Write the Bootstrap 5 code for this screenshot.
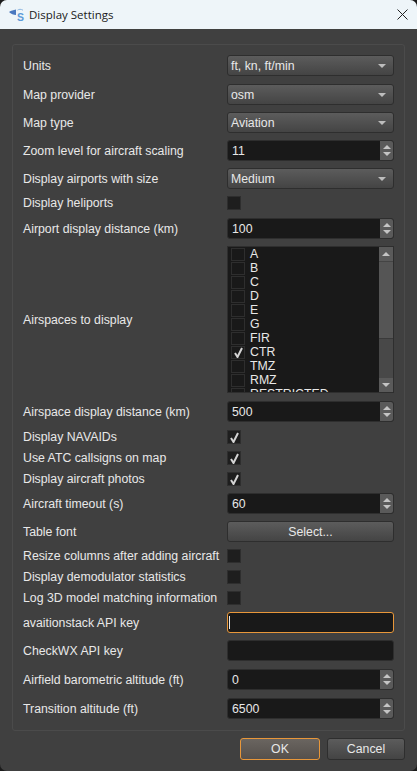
<!DOCTYPE html>
<html lang="en">
<head>
    <meta charset="UTF-8">
    <meta name="viewport" content="width=device-width, initial-scale=1.0">
    <title>Display Settings</title>
    <link rel="stylesheet" href="https://cdn.jsdelivr.net/npm/bootstrap@5.3.0/dist/css/bootstrap.min.css">
    <style>
        html { height: 100%; background: #1c1c1c; }
        body { height: 100%; background: #404040; color: #e8e8e8; font-family: "Liberation Sans", Arial, sans-serif; font-size: 12.3px; overflow: hidden; border-radius: 7px; }
        .win-title { height: 29px; background: #eef5f9; color: #1a1a1a; padding-left: 8px; font-family: "Open Sans", sans-serif; font-size: 11.5px; }
        .win-close { margin-left: auto; margin-right: 9px; }
        .group-box { margin: 15px 12px 0 12px; height: 687px; border: 1px solid #4b4b4b; border-radius: 3px; padding: 10px 11px 0 10px; }
        .set-row { display: flex; align-items: center; margin-bottom: 7px; }
        .set-row.wide-gap { margin-bottom: 8px; }
        .tick-row { height: 14px; }
        .set-label { width: 204px; flex: none; white-space: nowrap; line-height: 18px; padding-top: 1px; }
        .tick-row .set-label { padding-top: 0; }
        .ctl { width: 167px; flex: none; }
        .combo { height: 21px; border: 1px solid #2e2e2e; border-radius: 3px; background: linear-gradient(#5c5c5c, #444); padding: 0 12px 0 3px; line-height: 20px; }
        .combo::after { content: ""; border: 4px solid transparent; border-top: 4px solid #bdbdbd; border-bottom: 0; margin-top: 8px; float: right; margin-right: -5px; }
        .spin { height: 21px; display: flex; border: 1px solid #2e2e2e; border-radius: 3px; background: #191919; line-height: 20px; overflow: hidden; }
        .spin-val { flex: 1; padding-left: 4px; }
        .spin-btns { width: 13px; background: #5a5a5a; display: flex; flex-direction: column; align-items: center; justify-content: center; gap: 3px; }
        .arr-up { border: 4px solid transparent; border-bottom: 4px solid #c4c4c4; border-top: 0; }
        .arr-down { border: 4px solid transparent; border-top: 4px solid #c4c4c4; border-bottom: 0; }
        .tick { width: 14px; height: 14px; background: #1e1e1e; border: 1px solid #2e2e2e; flex: none; display: flex; align-items: center; justify-content: center; }
        .tick svg { display: block; }
        .air-list { height: 147px; border: 1px solid #2e2e2e; background: #191919; display: flex; overflow: hidden; }
        .air-items { flex: 1; padding: 0 0 0 3px; overflow: hidden; }
        .air-item { height: 14px; display: flex; align-items: center; gap: 5px; line-height: 14px; }
        .air-item .tick { background: #191919; height: 13px; }
        .air-scroll { width: 14px; background: #484848; display: flex; flex-direction: column; }
        .scroll-btn { height: 14px; background: #5a5a5a; display: flex; align-items: center; justify-content: center; }
        .scroll-thumb { height: 78px; background: #555; border-top: 1px solid #444; border-bottom: 1px solid #3a3a3a; }
        .qt-btn { height: 21px; border: 1px solid #2e2e2e; border-radius: 3px; background: linear-gradient(#5c5c5c, #444); text-align: center; line-height: 20px; }
        .text-in { height: 21px; border: 1px solid #2e2e2e; border-radius: 3px; background: #191919; }
        .text-in.focused { border-color: #e8973a; padding: 3px 0 0 1px; }
        .caret-bar { display: block; width: 1px; height: 13px; background: #e8e8e8; }
        .win-foot { margin: 7px 12px 0 0; gap: 7px; }
        .win-foot .qt-btn { height: 22px; line-height: 21px; }
        .ok-btn.qt-btn { width: 80px; border-color: #e8973a; background: linear-gradient(#6a6560, #55504c); }
        .cancel-btn { width: 78px; }
    </style>
</head>
<body>
    <div class="win-title d-flex align-items-center">
        <svg width="17" height="14" viewBox="0 0 17 14" class="me-1">
            <path d="M1 4 C3 2.5 5.5 2.5 8 1.5 L8 7 C5.5 6.8 3 6 1 4 Z" fill="#4a78c0"/>
            <path d="M9.5 2.2 C11 1 13 1 15 2.2" stroke="#8fb8e2" fill="none"/>
            <text x="9" y="12.5" font-size="10.5" font-weight="700" font-family="Liberation Sans" fill="#5c9ad8">S</text>
        </svg>
        <span>Display Settings</span>
        <svg class="win-close" width="11" height="11" viewBox="0 0 11 11"><path d="M.5.5l10 10M10.5.5l-10 10" stroke="#222" fill="none"/></svg>
    </div>

    <div class="group-box">
        <div class="set-row wide-gap"><div class="set-label">Units</div><div class="ctl combo">ft, kn, ft/min</div></div>
        <div class="set-row"><div class="set-label">Map provider</div><div class="ctl combo">osm</div></div>
        <div class="set-row"><div class="set-label">Map type</div><div class="ctl combo">Aviation</div></div>
        <div class="set-row"><div class="set-label">Zoom level for aircraft scaling</div><div class="ctl spin"><div class="spin-val">11</div><div class="spin-btns"><i class="arr-up"></i><i class="arr-down"></i></div></div></div>
        <div class="set-row"><div class="set-label">Display airports with size</div><div class="ctl combo">Medium</div></div>
        <div class="set-row tick-row wide-gap"><div class="set-label">Display heliports</div><div class="tick"></div></div>
        <div class="set-row"><div class="set-label">Airport display distance (km)</div><div class="ctl spin"><div class="spin-val">100</div><div class="spin-btns"><i class="arr-up"></i><i class="arr-down"></i></div></div></div>
        <div class="set-row wide-gap">
            <div class="set-label">Airspaces to display</div>
            <div class="ctl air-list">
                <div class="air-items" id="airItems"></div>
                <div class="air-scroll">
                    <div class="scroll-btn"><i class="arr-up"></i></div>
                    <div class="scroll-thumb"></div>
                    <div class="flex-grow-1"></div>
                    <div class="scroll-btn"><i class="arr-down"></i></div>
                </div>
            </div>
        </div>
        <div class="set-row wide-gap"><div class="set-label">Airspace display distance (km)</div><div class="ctl spin"><div class="spin-val">500</div><div class="spin-btns"><i class="arr-up"></i><i class="arr-down"></i></div></div></div>
        <div class="set-row tick-row"><div class="set-label">Display NAVAIDs</div><div class="tick"><svg width="11" height="11" viewBox="0 0 11 11"><path d="M2 6l2.5 4L9 1" stroke="#d4d4d4" stroke-width="2" fill="none"/></svg></div></div>
        <div class="set-row tick-row"><div class="set-label">Use ATC callsigns on map</div><div class="tick"><svg width="11" height="11" viewBox="0 0 11 11"><path d="M2 6l2.5 4L9 1" stroke="#d4d4d4" stroke-width="2" fill="none"/></svg></div></div>
        <div class="set-row tick-row"><div class="set-label">Display aircraft photos</div><div class="tick"><svg width="11" height="11" viewBox="0 0 11 11"><path d="M2 6l2.5 4L9 1" stroke="#d4d4d4" stroke-width="2" fill="none"/></svg></div></div>
        <div class="set-row"><div class="set-label">Aircraft timeout (s)</div><div class="ctl spin"><div class="spin-val">60</div><div class="spin-btns"><i class="arr-up"></i><i class="arr-down"></i></div></div></div>
        <div class="set-row"><div class="set-label">Table font</div><div class="ctl qt-btn">Select...</div></div>
        <div class="set-row tick-row"><div class="set-label">Resize columns after adding aircraft</div><div class="tick"></div></div>
        <div class="set-row tick-row"><div class="set-label">Display demodulator statistics</div><div class="tick"></div></div>
        <div class="set-row tick-row"><div class="set-label">Log 3D model matching information</div><div class="tick"></div></div>
        <div class="set-row"><div class="set-label">avaitionstack API key</div><div class="ctl text-in focused"><span class="caret-bar"></span></div></div>
        <div class="set-row wide-gap"><div class="set-label">CheckWX API key</div><div class="ctl text-in"></div></div>
        <div class="set-row wide-gap"><div class="set-label">Airfield barometric altitude (ft)</div><div class="ctl spin"><div class="spin-val">0</div><div class="spin-btns"><i class="arr-up"></i><i class="arr-down"></i></div></div></div>
        <div class="set-row"><div class="set-label">Transition altitude (ft)</div><div class="ctl spin"><div class="spin-val">6500</div><div class="spin-btns"><i class="arr-up"></i><i class="arr-down"></i></div></div></div>
    </div>

    <div class="win-foot d-flex justify-content-end">
        <div class="qt-btn ok-btn">OK</div>
        <div class="qt-btn cancel-btn">Cancel</div>
    </div>

    <script>
        const zones = ["A", "B", "C", "D", "E", "G", "FIR", "CTR", "TMZ", "RMZ", "RESTRICTED"];
        const tickSvg = '<svg width="11" height="11" viewBox="0 0 11 11"><path d="M2 6l2.5 4L9 1" stroke="#d4d4d4" stroke-width="2" fill="none"/></svg>';
        document.getElementById("airItems").innerHTML = zones.map(z =>
            `<div class="air-item"><div class="tick">${z == "CTR" ? tickSvg : ""}</div><span>${z}</span></div>`
        ).join("");
    </script>
    <script src="https://cdn.jsdelivr.net/npm/bootstrap@5.3.0/dist/js/bootstrap.bundle.min.js"></script>
</body>
</html>
